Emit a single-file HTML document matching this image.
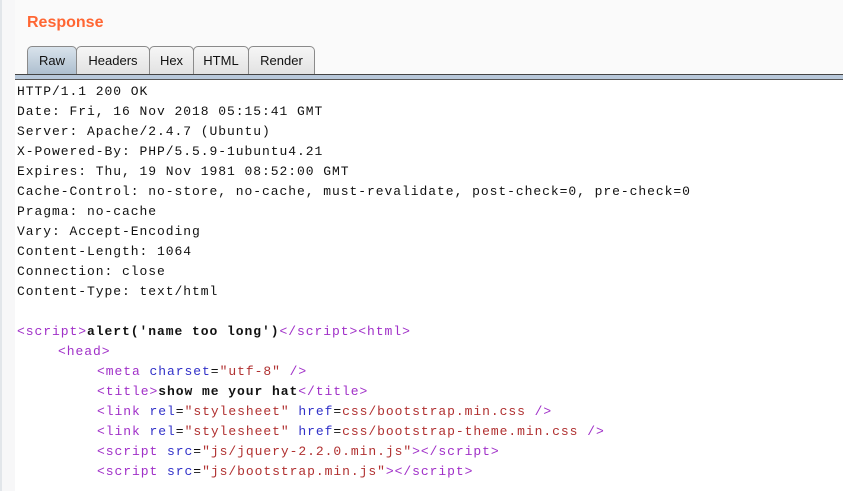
<!DOCTYPE html>
<html><head><style>
body{margin:0;width:843px;height:491px;background:#fff;overflow:hidden;position:relative;font-family:"Liberation Sans",sans-serif}
.top{position:absolute;left:0;top:0;width:843px;height:75px;background:#fafafa}
.lb{position:absolute;left:0;top:0;width:15px;height:491px;background:#f7f7f8;border-left:2px solid #e2e6ea;box-sizing:border-box}
.title{position:absolute;left:27px;top:14px;color:#ff6633;font-weight:bold;font-size:16px}
.tab{position:absolute;top:46px;height:28px;box-sizing:border-box;border:1px solid #8a8a8a;border-bottom:none;border-radius:5px 5px 0 0;background:linear-gradient(#f6f6f6,#e2e2e2);font-size:13px;text-align:center;line-height:27px;color:#111}
.tab.a{background:linear-gradient(#d9e3ec,#aebfcf)}
.bar{position:absolute;left:15px;top:74px;width:828px;height:6px;background:#b8c8da;border-top:1px solid #444;border-bottom:1px solid #555;box-sizing:border-box}
.c{position:absolute;left:17px;top:82px;margin:0;font-family:"Liberation Mono",monospace;font-size:13px;letter-spacing:0.95px;line-height:20px;color:#111;white-space:pre}
.c div{height:20px}
.i1{padding-left:41px}.i2{padding-left:80px}
.t{color:#a030c8}.at{color:#3030c8}.v{color:#b03030}b{font-weight:bold}
</style></head><body>
<div class="top"></div><div class="lb"></div>
<div class="title">Response</div>
<div class="tab a" style="left:27px;width:50px">Raw</div>
<div class="tab" style="left:76px;width:74px">Headers</div>
<div class="tab" style="left:149px;width:45px">Hex</div>
<div class="tab" style="left:193px;width:56px">HTML</div>
<div class="tab" style="left:248px;width:67px">Render</div>
<div class="bar"></div>
<div class="c"><div>HTTP/1.1 200 OK</div><div>Date: Fri, 16 Nov 2018 05:15:41 GMT</div><div>Server: Apache/2.4.7 (Ubuntu)</div><div>X-Powered-By: PHP/5.5.9-1ubuntu4.21</div><div>Expires: Thu, 19 Nov 1981 08:52:00 GMT</div><div>Cache-Control: no-store, no-cache, must-revalidate, post-check=0, pre-check=0</div><div>Pragma: no-cache</div><div>Vary: Accept-Encoding</div><div>Content-Length: 1064</div><div>Connection: close</div><div>Content-Type: text/html</div><div></div><div><span class="t">&lt;script&gt;</span><b>alert('name too long')</b><span class="t">&lt;/script&gt;&lt;html&gt;</span></div><div class="i1"><span class="t">&lt;head&gt;</span></div><div class="i2"><span class="t">&lt;meta</span> <span class="at">charset</span>=<span class="v">"utf-8"</span> <span class="t">/&gt;</span></div><div class="i2"><span class="t">&lt;title&gt;</span><b>show me your hat</b><span class="t">&lt;/title&gt;</span></div><div class="i2"><span class="t">&lt;link</span> <span class="at">rel</span>=<span class="v">"stylesheet"</span> <span class="at">href</span>=<span class="v">css/bootstrap.min.css</span> <span class="t">/&gt;</span></div><div class="i2"><span class="t">&lt;link</span> <span class="at">rel</span>=<span class="v">"stylesheet"</span> <span class="at">href</span>=<span class="v">css/bootstrap-theme.min.css</span> <span class="t">/&gt;</span></div><div class="i2"><span class="t">&lt;script</span> <span class="at">src</span>=<span class="v">"js/jquery-2.2.0.min.js"</span><span class="t">&gt;&lt;/script&gt;</span></div><div class="i2"><span class="t">&lt;script</span> <span class="at">src</span>=<span class="v">"js/bootstrap.min.js"</span><span class="t">&gt;&lt;/script&gt;</span></div></div>
</body></html>
